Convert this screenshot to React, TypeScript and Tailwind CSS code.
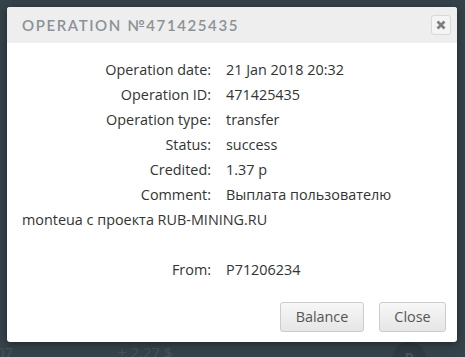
const rows = [
  { label: 'Operation date:', value: '21 Jan 2018 20:32' },
  { label: 'Operation ID:', value: '471425435' },
  { label: 'Operation type:', value: 'transfer' },
  { label: 'Status:', value: 'success' },
  { label: 'Credited:', value: '1.37 р' },
];

function Row({ label, value }: { label: string; value: string }) {
  return (
    <div className="flex h-[25px] items-center">
      <span className="w-[189px] shrink-0 text-right">{label}</span>
      <span className="ml-[15px]">{value}</span>
    </div>
  );
}

export default function App() {
  return (
    <div className="relative h-[357px] w-[465px] overflow-hidden bg-[#36424a] pt-[7px] pl-[7px] font-['Open_Sans',sans-serif]">
      {/* page behind the modal */}
      <div className="absolute bottom-[-6px] left-[118px] text-[15px] text-[#46525a]">+ 2.27 $</div>
      <div className="absolute bottom-[-6px] left-[-4px] text-[15px] text-[#46525a]">07</div>
      <div className="absolute left-[392px] top-[342px] flex h-[34px] w-[34px] items-start justify-center rounded-full bg-[#2f3a42] pt-[4px] text-[15px] font-bold text-[#46525a]">
        P
      </div>

      <div className="relative w-[450px] overflow-hidden rounded-[3px] bg-white shadow-[0_2px_8px_rgba(0,0,0,0.4)]">
        <div className="flex h-[36px] items-center justify-between bg-[#eeeeee] pl-[15px] pr-[6px]">
          <h1 className="text-[15px] font-semibold uppercase tracking-[1.6px] text-[#8c9197] font-['Lato',sans-serif]">
            Operation №471425435
          </h1>
          <button className="flex h-[20px] w-[20px] items-center justify-center rounded-[3px] border border-[#d9d9d9] bg-[#f4f4f4]">
            <svg width="10" height="10" viewBox="0 0 10 10">
              <path d="M1.5 1.5 L8.5 8.5 M8.5 1.5 L1.5 8.5" stroke="#7f7f7f" strokeWidth="2.6" strokeLinecap="butt" />
            </svg>
          </button>
        </div>

        <div className="px-[15px] pt-[14px] text-[14.4px] leading-[25px] text-[#333333]">
          {rows.map((r) => (
            <Row key={r.label} {...r} />
          ))}
          <p>
            <span className="mr-[15px] inline-block w-[189px] text-right">Comment:</span>
            Выплата пользователю monteua с проекта RUB-MINING.RU
          </p>
          <div className="h-[25px]" />
          <Row label="From:" value="P71206234" />
        </div>

        <div className="flex justify-end gap-[15px] pt-[20px] pr-[11px] pb-[10px]">
          <button className="h-[30px] w-[84px] rounded-[3px] border border-[#cccccc] bg-gradient-to-b from-[#f7f7f7] to-[#e6e6e6] text-[14.4px] text-[#555555]">
            Balance
          </button>
          <button className="h-[30px] w-[67px] rounded-[3px] border border-[#cccccc] bg-gradient-to-b from-[#f7f7f7] to-[#e6e6e6] text-[14.4px] text-[#555555]">
            Close
          </button>
        </div>
      </div>
    </div>
  );
}
